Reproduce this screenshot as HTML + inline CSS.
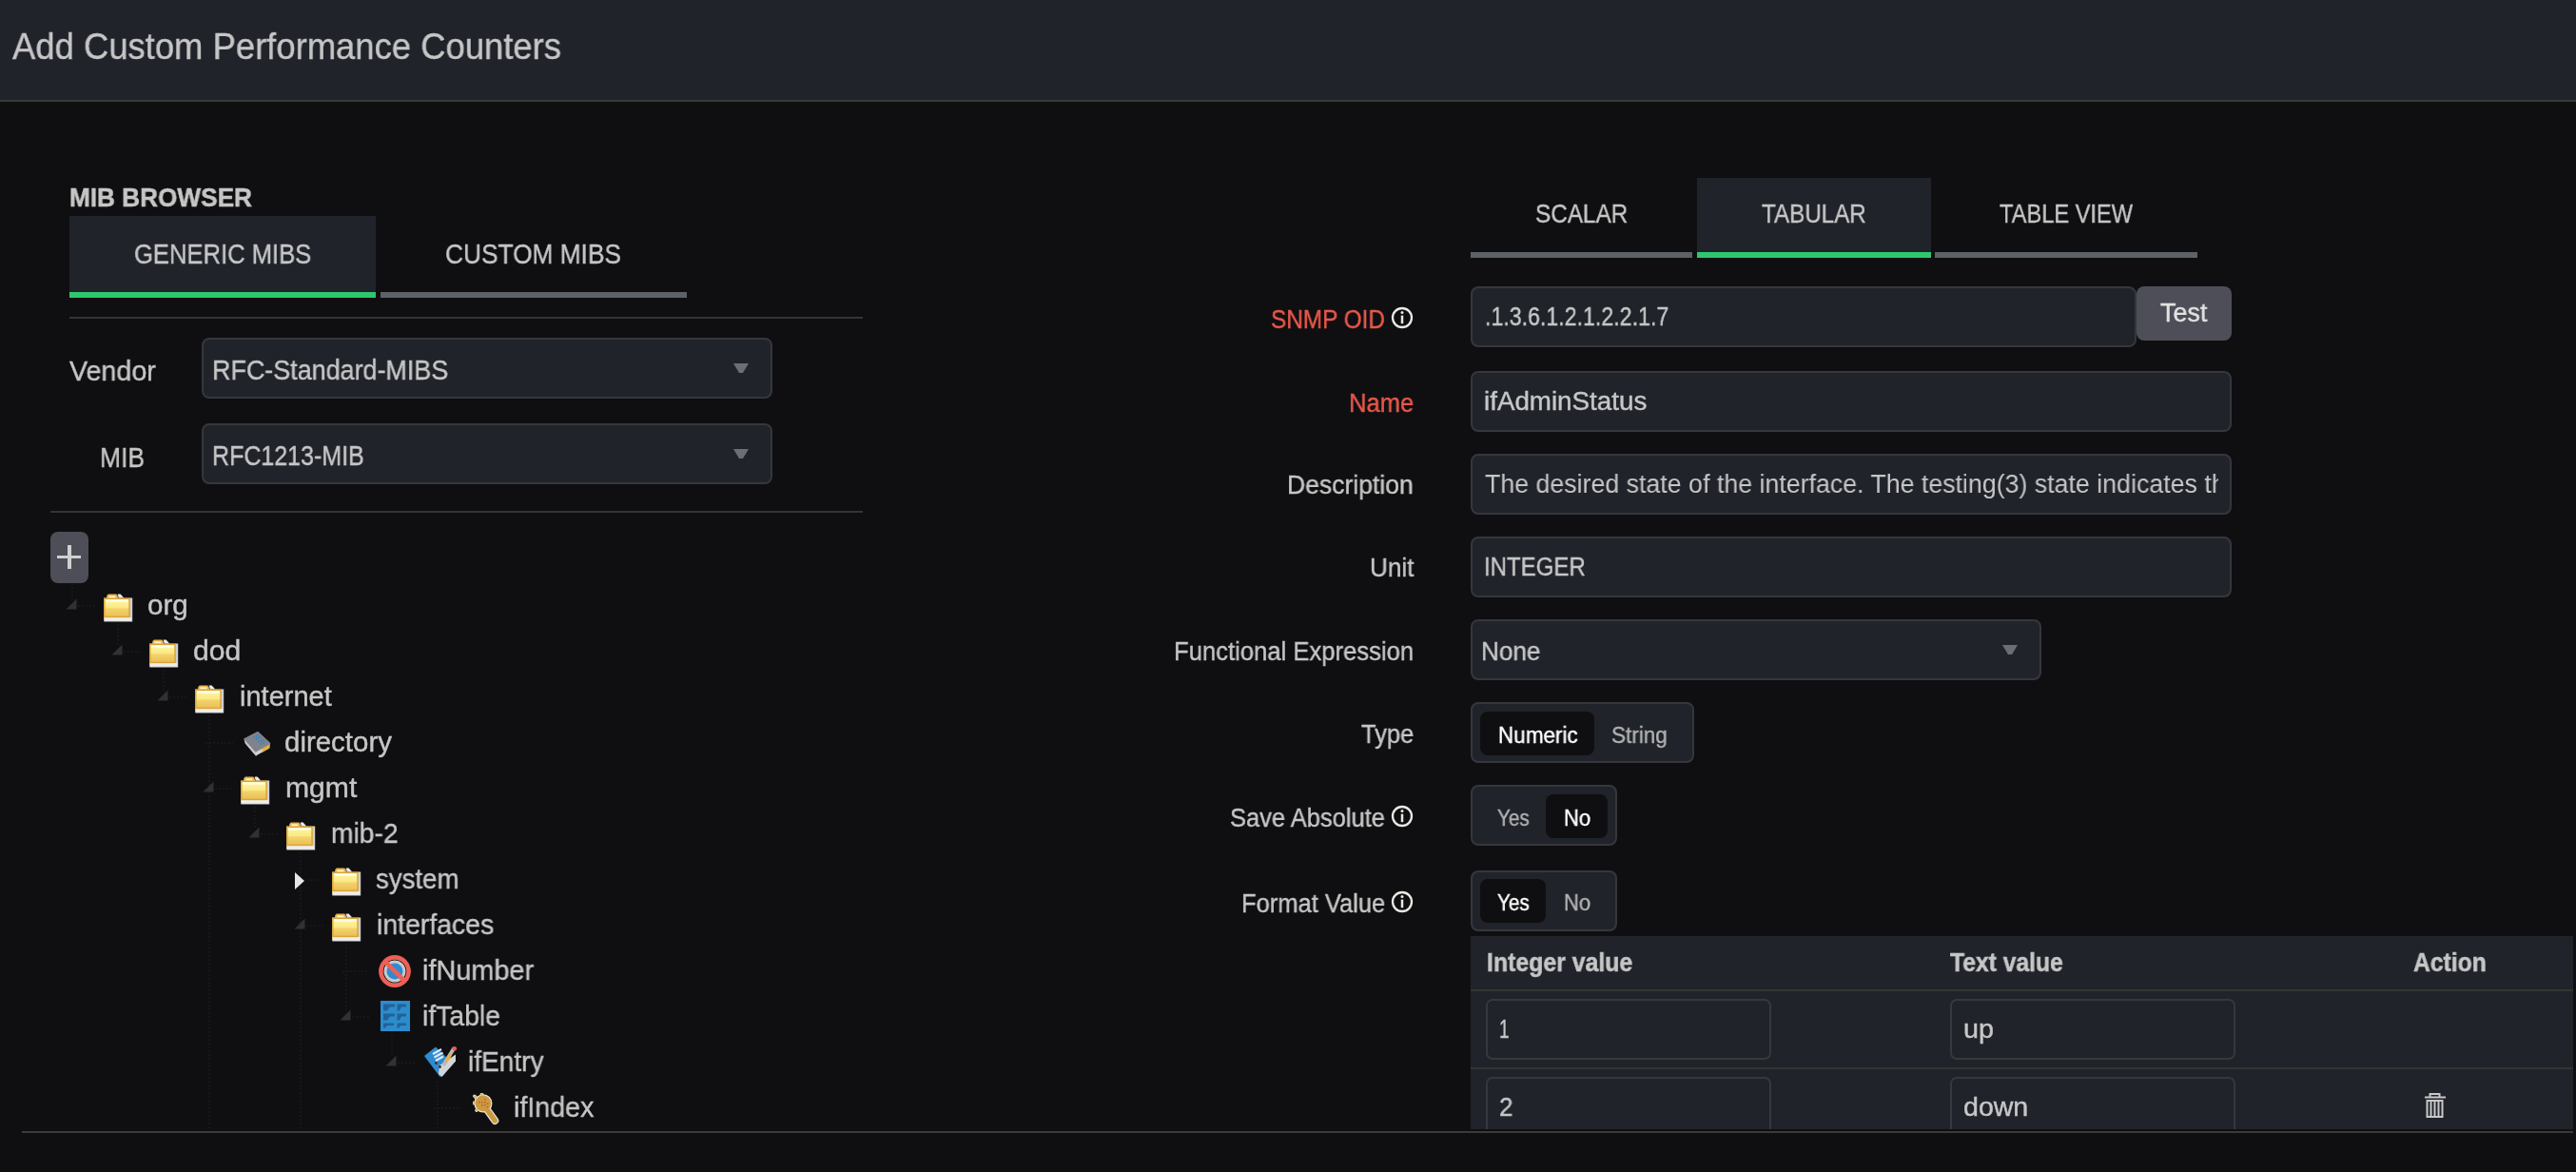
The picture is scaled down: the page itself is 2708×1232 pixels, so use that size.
<!DOCTYPE html>
<html><head><meta charset="utf-8"><title>Add Custom Performance Counters</title>
<style>
html,body{margin:0;padding:0;background:#0f0f11;}
body{width:2708px;height:1232px;position:relative;font-family:"Liberation Sans",sans-serif;}
div{position:absolute;box-sizing:border-box;}
.t{white-space:nowrap;transform-origin:0 0;will-change:transform;}
.a{position:absolute;display:block;}
</style></head><body>
<svg width="0" height="0" style="position:absolute"><defs><linearGradient id="fg" x1="0" y1="0" x2="0" y2="1"><stop offset="0" stop-color="#fff9a6"/><stop offset=".5" stop-color="#fbe884"/><stop offset=".55" stop-color="#f3d46c"/><stop offset="1" stop-color="#e9bc52"/></linearGradient></defs></svg>
<div style="left:0px;top:0px;width:2708px;height:105px;background:#21232b;"></div>
<div style="left:0px;top:105px;width:2708px;height:2px;background:#3a3937;"></div>
<div class="t" style="left:13.25px;top:29.00px;font-size:39px;line-height:39px;color:#c6c6c6;-webkit-text-stroke:0.4px;transform:scaleX(0.9340);">Add Custom Performance Counters</div>
<div class="t" style="left:72.75px;top:193.50px;font-size:28px;line-height:28px;color:#c6c6c6;font-weight:bold;-webkit-text-stroke:0.5px;transform:scaleX(0.9351);">MIB BROWSER</div>
<div style="left:73px;top:227px;width:322px;height:80px;background:#21232b;"></div>
<div style="left:73px;top:307px;width:322px;height:6px;background:#2dc86e;"></div>
<div style="left:400px;top:307px;width:322px;height:6px;background:#5e6266;"></div>
<div class="t" style="left:140.75px;top:252.50px;font-size:29px;line-height:29px;color:#c6c6c6;-webkit-text-stroke:0.4px;transform:scaleX(0.8823);">GENERIC MIBS</div>
<div class="t" style="left:468.25px;top:252.50px;font-size:29px;line-height:29px;color:#c6c6c6;-webkit-text-stroke:0.4px;transform:scaleX(0.9064);">CUSTOM MIBS</div>
<div style="left:73px;top:333px;width:834px;height:2px;background:#343434;"></div>
<div class="t" style="left:73.25px;top:376.25px;font-size:29px;line-height:29px;color:#c6c6c6;-webkit-text-stroke:0.4px;transform:scaleX(0.9875);">Vendor</div>
<div style="left:212px;top:355px;width:600px;height:64px;background:#21232b;border:2px solid #35373d;border-radius:8px;"></div>
<div class="t" style="left:222.50px;top:374.75px;font-size:29px;line-height:29px;color:#c6c6c6;-webkit-text-stroke:0.4px;transform:scaleX(0.9280);">RFC-Standard-MIBS</div>
<div class="t" style="left:104.50px;top:466.50px;font-size:29px;line-height:29px;color:#c6c6c6;-webkit-text-stroke:0.4px;transform:scaleX(0.9115);">MIB</div>
<div style="left:212px;top:445px;width:600px;height:64px;background:#21232b;border:2px solid #35373d;border-radius:8px;"></div>
<div class="t" style="left:222.50px;top:464.75px;font-size:29px;line-height:29px;color:#c6c6c6;-webkit-text-stroke:0.4px;transform:scaleX(0.8619);">RFC1213-MIB</div>
<svg class="a" style="left:770px;top:381px" width="18" height="12" viewBox="0 0 18 12"><path d="M1 1h16l-6 10h-4z" fill="#6b6e73"/></svg>
<svg class="a" style="left:770px;top:471px" width="18" height="12" viewBox="0 0 18 12"><path d="M1 1h16l-6 10h-4z" fill="#6b6e73"/></svg>
<div style="left:53px;top:537px;width:854px;height:2px;background:#343434;"></div>
<div style="left:53px;top:559px;width:40px;height:54px;background:#4d4e58;border-radius:8px"></div>
<div style="left:60.2px;top:584px;width:25.0px;height:3.2999999999999545px;background:#d0d0d0;"></div>
<div style="left:71.3px;top:573px;width:3.299999999999997px;height:25px;background:#d0d0d0;"></div>
<div style="left:75px;top:613px;width:2px;height:17px;background:repeating-linear-gradient(to bottom,#17171a 0 2px,transparent 2px 4px)"></div>
<div style="left:123px;top:656px;width:2px;height:22px;background:repeating-linear-gradient(to bottom,#17171a 0 2px,transparent 2px 4px)"></div>
<div style="left:171px;top:704px;width:2px;height:22px;background:repeating-linear-gradient(to bottom,#17171a 0 2px,transparent 2px 4px)"></div>
<div style="left:219px;top:752px;width:2px;height:436px;background:repeating-linear-gradient(to bottom,#17171a 0 2px,transparent 2px 4px)"></div>
<div style="left:267px;top:848px;width:2px;height:22px;background:repeating-linear-gradient(to bottom,#17171a 0 2px,transparent 2px 4px)"></div>
<div style="left:315px;top:896px;width:2px;height:292px;background:repeating-linear-gradient(to bottom,#17171a 0 2px,transparent 2px 4px)"></div>
<div style="left:363px;top:992px;width:2px;height:70px;background:repeating-linear-gradient(to bottom,#17171a 0 2px,transparent 2px 4px)"></div>
<div style="left:411px;top:1088px;width:2px;height:22px;background:repeating-linear-gradient(to bottom,#17171a 0 2px,transparent 2px 4px)"></div>
<div style="left:459px;top:1136px;width:2px;height:52px;background:repeating-linear-gradient(to bottom,#17171a 0 2px,transparent 2px 4px)"></div>
<div style="left:82px;top:636px;width:19px;height:2px;background:repeating-linear-gradient(to right,#17171a 0 2px,transparent 2px 4px)"></div>
<svg class="a" style="left:68px;top:628.0px" width="13" height="13" viewBox="0 0 13 13"><path d="M12.5 1.5v11H1.5z" fill="#303035"/></svg>
<svg class="a" style="left:108px;top:622.0px" width="32" height="32" viewBox="0 0 32 32"><path d="M1.400 26h27V6.600h2.800v24.900H1.400z" fill="#cfcfd6"/><rect x="1.400" y="27" width="28.600" height="3.600" fill="#f0eee9"/><path d="M4.200 7V4.200l1.600-1.600h8.400l1.600 1.800V7z" fill="#e7b349"/><rect x="6.400" y="4.400" width="7" height="1.800" fill="#fff6cc"/><path d="M15.600 2.600h3l3.600 4h-5.400z" fill="#e8e8ee"/><rect x="1.100" y="6.600" width="27.600" height="20.500" fill="url(#fg)"/><rect x="1.800" y="7.300" width="26.200" height="19.100" fill="none" stroke="#dca43a" stroke-width="1.400"/><rect x="3" y="8.600" width="23.600" height="2" fill="#fffdf2"/></svg>
<div class="t" style="left:155.00px;top:622.00px;font-size:29px;line-height:29px;color:#c6c6c6;-webkit-text-stroke:0.4px;transform:scaleX(1.0202);">org</div>
<div style="left:130px;top:684px;width:19px;height:2px;background:repeating-linear-gradient(to right,#17171a 0 2px,transparent 2px 4px)"></div>
<svg class="a" style="left:116px;top:676.0px" width="13" height="13" viewBox="0 0 13 13"><path d="M12.5 1.5v11H1.5z" fill="#303035"/></svg>
<svg class="a" style="left:156px;top:670.0px" width="32" height="32" viewBox="0 0 32 32"><path d="M1.400 26h27V6.600h2.800v24.900H1.400z" fill="#cfcfd6"/><rect x="1.400" y="27" width="28.600" height="3.600" fill="#f0eee9"/><path d="M4.200 7V4.200l1.600-1.600h8.400l1.600 1.800V7z" fill="#e7b349"/><rect x="6.400" y="4.400" width="7" height="1.800" fill="#fff6cc"/><path d="M15.600 2.600h3l3.600 4h-5.400z" fill="#e8e8ee"/><rect x="1.100" y="6.600" width="27.600" height="20.500" fill="url(#fg)"/><rect x="1.800" y="7.300" width="26.200" height="19.100" fill="none" stroke="#dca43a" stroke-width="1.400"/><rect x="3" y="8.600" width="23.600" height="2" fill="#fffdf2"/></svg>
<div class="t" style="left:202.50px;top:670.00px;font-size:29px;line-height:29px;color:#c6c6c6;-webkit-text-stroke:0.4px;transform:scaleX(1.0388);">dod</div>
<div style="left:178px;top:732px;width:19px;height:2px;background:repeating-linear-gradient(to right,#17171a 0 2px,transparent 2px 4px)"></div>
<svg class="a" style="left:164px;top:724.0px" width="13" height="13" viewBox="0 0 13 13"><path d="M12.5 1.5v11H1.5z" fill="#303035"/></svg>
<svg class="a" style="left:204px;top:718.0px" width="32" height="32" viewBox="0 0 32 32"><path d="M1.400 26h27V6.600h2.800v24.900H1.400z" fill="#cfcfd6"/><rect x="1.400" y="27" width="28.600" height="3.600" fill="#f0eee9"/><path d="M4.200 7V4.200l1.600-1.600h8.400l1.600 1.800V7z" fill="#e7b349"/><rect x="6.400" y="4.400" width="7" height="1.800" fill="#fff6cc"/><path d="M15.600 2.600h3l3.600 4h-5.400z" fill="#e8e8ee"/><rect x="1.100" y="6.600" width="27.600" height="20.500" fill="url(#fg)"/><rect x="1.800" y="7.300" width="26.200" height="19.100" fill="none" stroke="#dca43a" stroke-width="1.400"/><rect x="3" y="8.600" width="23.600" height="2" fill="#fffdf2"/></svg>
<div class="t" style="left:251.50px;top:718.00px;font-size:29px;line-height:29px;color:#c6c6c6;-webkit-text-stroke:0.4px;">internet</div>
<div style="left:216px;top:780px;width:29px;height:2px;background:repeating-linear-gradient(to right,#17171a 0 2px,transparent 2px 4px)"></div>
<svg class="a" style="left:255px;top:765.0px" width="32" height="32" viewBox="0 0 32 32"><path d="M2 11.800L3.200 16.500 14 29.300V24z" fill="#c9c9cd" stroke="#c9c9cd" stroke-width="1" stroke-linejoin="round"/><path d="M14 24.500v5L28.300 21.500l.3-5z" fill="#d2d2d5"/><path d="M20.500 26L28.300 21.500l.3-5L20.500 21z" fill="#e2b13e"/><path d="M2.600 11.800L16 5 28.300 16.500 14 24.500z" fill="#82828c" stroke="#82828c" stroke-width="2" stroke-linejoin="round"/><g stroke="#2f86c6" stroke-width="1.600" stroke-dasharray="1.500 1.300"><path d="M11.300 10.300L17 7.550"/><path d="M13.700 12.700L19.500 9.950"/><path d="M16.200 15.100L22 12.350"/><path d="M18.600 17.500L24.400 14.750"/><path d="M14 10.800L18.300 8.750"/><path d="M19.500 14.800L23.300 13"/></g></svg>
<div class="t" style="left:299.00px;top:766.00px;font-size:29px;line-height:29px;color:#c6c6c6;-webkit-text-stroke:0.4px;transform:scaleX(1.0156);">directory</div>
<div style="left:226px;top:828px;width:19px;height:2px;background:repeating-linear-gradient(to right,#17171a 0 2px,transparent 2px 4px)"></div>
<svg class="a" style="left:212px;top:820.0px" width="13" height="13" viewBox="0 0 13 13"><path d="M12.5 1.5v11H1.5z" fill="#303035"/></svg>
<svg class="a" style="left:252px;top:814.0px" width="32" height="32" viewBox="0 0 32 32"><path d="M1.400 26h27V6.600h2.800v24.900H1.400z" fill="#cfcfd6"/><rect x="1.400" y="27" width="28.600" height="3.600" fill="#f0eee9"/><path d="M4.200 7V4.200l1.600-1.600h8.400l1.600 1.800V7z" fill="#e7b349"/><rect x="6.400" y="4.400" width="7" height="1.800" fill="#fff6cc"/><path d="M15.600 2.600h3l3.600 4h-5.400z" fill="#e8e8ee"/><rect x="1.100" y="6.600" width="27.600" height="20.500" fill="url(#fg)"/><rect x="1.800" y="7.300" width="26.200" height="19.100" fill="none" stroke="#dca43a" stroke-width="1.400"/><rect x="3" y="8.600" width="23.600" height="2" fill="#fffdf2"/></svg>
<div class="t" style="left:299.90px;top:814.00px;font-size:29px;line-height:29px;color:#c6c6c6;-webkit-text-stroke:0.4px;transform:scaleX(1.0393);">mgmt</div>
<div style="left:274px;top:876px;width:19px;height:2px;background:repeating-linear-gradient(to right,#17171a 0 2px,transparent 2px 4px)"></div>
<svg class="a" style="left:260px;top:868.0px" width="13" height="13" viewBox="0 0 13 13"><path d="M12.5 1.5v11H1.5z" fill="#303035"/></svg>
<svg class="a" style="left:300px;top:862.0px" width="32" height="32" viewBox="0 0 32 32"><path d="M1.400 26h27V6.600h2.800v24.900H1.400z" fill="#cfcfd6"/><rect x="1.400" y="27" width="28.600" height="3.600" fill="#f0eee9"/><path d="M4.200 7V4.200l1.600-1.600h8.400l1.600 1.800V7z" fill="#e7b349"/><rect x="6.400" y="4.400" width="7" height="1.800" fill="#fff6cc"/><path d="M15.600 2.600h3l3.600 4h-5.400z" fill="#e8e8ee"/><rect x="1.100" y="6.600" width="27.600" height="20.500" fill="url(#fg)"/><rect x="1.800" y="7.300" width="26.200" height="19.100" fill="none" stroke="#dca43a" stroke-width="1.400"/><rect x="3" y="8.600" width="23.600" height="2" fill="#fffdf2"/></svg>
<div class="t" style="left:347.70px;top:862.00px;font-size:29px;line-height:29px;color:#c6c6c6;-webkit-text-stroke:0.4px;transform:scaleX(0.9727);">mib-2</div>
<div style="left:322px;top:924px;width:19px;height:2px;background:repeating-linear-gradient(to right,#17171a 0 2px,transparent 2px 4px)"></div>
<svg class="a" style="left:310px;top:917.0px" width="10" height="18" viewBox="0 0 10 18"><path d="M0 0l10 9L0 18z" fill="#e6e6e6"/></svg>
<svg class="a" style="left:348px;top:910.0px" width="32" height="32" viewBox="0 0 32 32"><path d="M1.400 26h27V6.600h2.800v24.900H1.400z" fill="#cfcfd6"/><rect x="1.400" y="27" width="28.600" height="3.600" fill="#f0eee9"/><path d="M4.200 7V4.200l1.600-1.600h8.400l1.600 1.800V7z" fill="#e7b349"/><rect x="6.400" y="4.400" width="7" height="1.800" fill="#fff6cc"/><path d="M15.600 2.600h3l3.600 4h-5.400z" fill="#e8e8ee"/><rect x="1.100" y="6.600" width="27.600" height="20.500" fill="url(#fg)"/><rect x="1.800" y="7.300" width="26.200" height="19.100" fill="none" stroke="#dca43a" stroke-width="1.400"/><rect x="3" y="8.600" width="23.600" height="2" fill="#fffdf2"/></svg>
<div class="t" style="left:395.10px;top:910.00px;font-size:29px;line-height:29px;color:#c6c6c6;-webkit-text-stroke:0.4px;transform:scaleX(0.9522);">system</div>
<div style="left:322px;top:972px;width:19px;height:2px;background:repeating-linear-gradient(to right,#17171a 0 2px,transparent 2px 4px)"></div>
<svg class="a" style="left:308px;top:964.0px" width="13" height="13" viewBox="0 0 13 13"><path d="M12.5 1.5v11H1.5z" fill="#303035"/></svg>
<svg class="a" style="left:348px;top:958.0px" width="32" height="32" viewBox="0 0 32 32"><path d="M1.400 26h27V6.600h2.800v24.900H1.400z" fill="#cfcfd6"/><rect x="1.400" y="27" width="28.600" height="3.600" fill="#f0eee9"/><path d="M4.200 7V4.200l1.600-1.600h8.400l1.600 1.800V7z" fill="#e7b349"/><rect x="6.400" y="4.400" width="7" height="1.800" fill="#fff6cc"/><path d="M15.600 2.600h3l3.600 4h-5.400z" fill="#e8e8ee"/><rect x="1.100" y="6.600" width="27.600" height="20.500" fill="url(#fg)"/><rect x="1.800" y="7.300" width="26.200" height="19.100" fill="none" stroke="#dca43a" stroke-width="1.400"/><rect x="3" y="8.600" width="23.600" height="2" fill="#fffdf2"/></svg>
<div class="t" style="left:395.50px;top:958.00px;font-size:29px;line-height:29px;color:#c6c6c6;-webkit-text-stroke:0.4px;transform:scaleX(0.9804);">interfaces</div>
<div style="left:360px;top:1020px;width:29px;height:2px;background:repeating-linear-gradient(to right,#17171a 0 2px,transparent 2px 4px)"></div>
<svg class="a" style="left:397px;top:1003.0px" width="36" height="36" viewBox="0 0 36 36"><circle cx="18" cy="18" r="11.5" fill="#c9cacc"/><circle cx="18" cy="18" r="8.5" fill="#2f8bd0"/><circle cx="18" cy="18" r="14.6" fill="none" stroke="#ee5f56" stroke-width="4.6"/><path d="M8 8L28 28" stroke="#ee5f56" stroke-width="4.6"/></svg>
<div class="t" style="left:443.70px;top:1006.00px;font-size:29px;line-height:29px;color:#c6c6c6;-webkit-text-stroke:0.4px;transform:scaleX(0.9957);">ifNumber</div>
<div style="left:370px;top:1068px;width:19px;height:2px;background:repeating-linear-gradient(to right,#17171a 0 2px,transparent 2px 4px)"></div>
<svg class="a" style="left:356px;top:1060.0px" width="13" height="13" viewBox="0 0 13 13"><path d="M12.5 1.5v11H1.5z" fill="#303035"/></svg>
<svg class="a" style="left:400px;top:1052.0px" width="32" height="32" viewBox="0 0 32 32"><rect x="0" y="0" width="31" height="32" fill="#2d8ccb"/><g fill="#21629a" transform="translate(0,-1.5)"><path d="M3 5h12v3h-5l-3 4H3z"/><path d="M17.5 5h9.5v3h-5l-2 4h-2.5z"/><path d="M3 15h12v3h-5l-3 4H3z"/><path d="M17.5 15h9.5v3h-5l-2 4h-2.5z"/><path d="M3 25h11v2.5H7l-2 2.5H3z"/><path d="M17.5 25h9.5v2.5h-6l-1.5 2.5h-2z"/></g></svg>
<div class="t" style="left:443.70px;top:1054.00px;font-size:29px;line-height:29px;color:#c6c6c6;-webkit-text-stroke:0.4px;transform:scaleX(0.9775);">ifTable</div>
<div style="left:418px;top:1116px;width:19px;height:2px;background:repeating-linear-gradient(to right,#17171a 0 2px,transparent 2px 4px)"></div>
<svg class="a" style="left:404px;top:1108.0px" width="13" height="13" viewBox="0 0 13 13"><path d="M12.5 1.5v11H1.5z" fill="#303035"/></svg>
<svg class="a" style="left:445px;top:1099.0px" width="36" height="34" viewBox="0 0 36 34"><path d="M1 11L13 1.5 24 12 22 30.5 17.5 33z" fill="#2f8bd0"/><path d="M17 21L34 9.5v7L19.5 33 16 30z" fill="#d4d5d9"/><path d="M10 9l9-5M11.500 12.500l9-5M13 16l8-4.500" stroke="#dfe9f2" stroke-width="2.200"/><path d="M32.500 2.500L21 21" stroke="#b9b9bd" stroke-width="4"/><path d="M29 9L24 17" stroke="#e8b23a" stroke-width="3"/><circle cx="32.800" cy="3.300" r="2.300" fill="#e85c50"/><circle cx="13.500" cy="18.500" r="1.400" fill="#3a3030"/><circle cx="17.500" cy="22.500" r="1.400" fill="#3a3030"/></svg>
<div class="t" style="left:492.00px;top:1102.00px;font-size:29px;line-height:29px;color:#c6c6c6;-webkit-text-stroke:0.4px;transform:scaleX(0.9679);">ifEntry</div>
<div style="left:456px;top:1164px;width:29px;height:2px;background:repeating-linear-gradient(to right,#17171a 0 2px,transparent 2px 4px)"></div>
<svg class="a" style="left:497px;top:1149.0px" width="30" height="34" viewBox="0 0 30 34"><g stroke="#e6dfd0" stroke-linejoin="round" stroke-linecap="round"><circle cx="10.900" cy="10.900" r="8.300" fill="#cb9a3f" stroke-width="2.600"/><path d="M14 16L23.300 29" stroke-width="8"/><path d="M3.500 5L1.800 3.200M2.300 10.500H.5M9.500 2.500V.8M5.500 16.500L4 18.200" stroke-width="3.400"/></g><circle cx="10.900" cy="10.900" r="8.300" fill="#cb9a3f"/><path d="M14 16L23.300 29" stroke="#cb9a3f" stroke-width="5.400" stroke-linecap="round"/><path d="M3.500 5L1.800 3.200M2.300 10.500H.5M9.500 2.500V.8M5.500 16.500L4 18.200" stroke="#d8ae58" stroke-width="1.600" stroke-linecap="round"/><g fill="#c05a40"><rect x="6" y="9" width="1.500" height="1.500"/><rect x="9" y="9" width="1.500" height="1.500"/><rect x="12" y="9" width="1.500" height="1.500"/><rect x="9" y="12" width="1.500" height="1.500"/><rect x="12" y="12" width="1.500" height="1.500"/><rect x="12" y="6" width="1.500" height="1.500"/><rect x="14.800" y="10.500" width="1.500" height="1.500"/><rect x="14.800" y="14" width="1.500" height="1.500"/></g></svg>
<div class="t" style="left:539.80px;top:1150.00px;font-size:29px;line-height:29px;color:#c6c6c6;-webkit-text-stroke:0.4px;transform:scaleX(0.9873);">ifIndex</div>
<div style="left:1546px;top:265px;width:233px;height:6px;background:#5e6266;"></div>
<div style="left:1784px;top:187px;width:246px;height:78px;background:#21232b;"></div>
<div style="left:1784px;top:265px;width:246px;height:6px;background:#2dc86e;"></div>
<div style="left:2034px;top:265px;width:276px;height:6px;background:#5e6266;"></div>
<div class="t" style="left:1614.00px;top:211.00px;font-size:28px;line-height:28px;color:#c6c6c6;-webkit-text-stroke:0.4px;transform:scaleX(0.8679);">SCALAR</div>
<div class="t" style="left:1851.50px;top:211.00px;font-size:28px;line-height:28px;color:#c6c6c6;-webkit-text-stroke:0.4px;transform:scaleX(0.8637);">TABULAR</div>
<div class="t" style="left:2101.80px;top:211.00px;font-size:28px;line-height:28px;color:#c6c6c6;-webkit-text-stroke:0.4px;transform:scaleX(0.8439);">TABLE VIEW</div>
<div class="t" style="left:1335.75px;top:323.00px;font-size:27px;line-height:27px;color:#e8584b;-webkit-text-stroke:0.4px;transform:scaleX(0.9021);">SNMP OID</div>
<svg class="a" style="left:1461.75px;top:322.2px" width="24" height="24" viewBox="0 0 24 24"><circle cx="12" cy="12" r="10" fill="none" stroke="#eae8e2" stroke-width="2.300"/><rect x="10.750" y="9.600" width="2.500" height="8.600" fill="#eae8e2"/><circle cx="12" cy="6.600" r="1.500" fill="#eae8e2"/></svg>
<div style="left:1546px;top:301px;width:700px;height:64px;background:#21232b;border:2px solid #35373d;border-radius:8px;"></div>
<div class="t" style="left:1560.75px;top:319.75px;font-size:27px;line-height:27px;color:#c6c6c6;-webkit-text-stroke:0.4px;transform:scaleX(0.8582);">.1.3.6.1.2.1.2.2.1.7</div>
<div style="left:2246px;top:301px;width:100px;height:57px;background:#4d4e58;border-radius:8px"></div>
<div class="t" style="left:2270.90px;top:315.90px;font-size:27px;line-height:27px;color:#e2e2e2;-webkit-text-stroke:0.4px;transform:scaleX(0.9966);">Test</div>
<div class="t" style="left:1417.75px;top:410.50px;font-size:27px;line-height:27px;color:#e8584b;-webkit-text-stroke:0.4px;transform:scaleX(0.9474);">Name</div>
<div style="left:1546px;top:390px;width:800px;height:64px;background:#21232b;border:2px solid #35373d;border-radius:8px;"></div>
<div class="t" style="left:1560.25px;top:408.75px;font-size:27px;line-height:27px;color:#c6c6c6;-webkit-text-stroke:0.4px;transform:scaleX(1.0281);">ifAdminStatus</div>
<div class="t" style="left:1353.25px;top:497.00px;font-size:27px;line-height:27px;color:#c6c6c6;-webkit-text-stroke:0.4px;transform:scaleX(0.9829);">Description</div>
<div style="left:1546px;top:477px;width:800px;height:64px;background:#21232b;border:2px solid #35373d;border-radius:8px;"></div>
<div style="left:1560px;top:479px;width:772px;height:60px;overflow:hidden"><div class="t" style="left:0.75px;top:16.50px;font-size:27px;line-height:27px;color:#c6c6c6;transform:scaleX(0.9906)">The desired state of the interface. The testing(3) state indicates that no operational packets</div></div>
<div class="t" style="left:1439.50px;top:584.25px;font-size:27px;line-height:27px;color:#c6c6c6;-webkit-text-stroke:0.4px;transform:scaleX(0.9686);">Unit</div>
<div style="left:1546px;top:564px;width:800px;height:64px;background:#21232b;border:2px solid #35373d;border-radius:8px;"></div>
<div class="t" style="left:1560.25px;top:582.50px;font-size:27px;line-height:27px;color:#c6c6c6;-webkit-text-stroke:0.4px;transform:scaleX(0.8895);">INTEGER</div>
<div class="t" style="left:1233.75px;top:671.75px;font-size:27px;line-height:27px;color:#c6c6c6;-webkit-text-stroke:0.4px;transform:scaleX(0.9496);">Functional Expression</div>
<div style="left:1546px;top:651px;width:600px;height:64px;background:#21232b;border:2px solid #35373d;border-radius:8px;"></div>
<div class="t" style="left:1556.50px;top:670.75px;font-size:28px;line-height:28px;color:#c6c6c6;-webkit-text-stroke:0.4px;transform:scaleX(0.9336);">None</div>
<svg class="a" style="left:2104px;top:677px" width="18" height="12" viewBox="0 0 18 12"><path d="M1 1h16l-6 10h-4z" fill="#6b6e73"/></svg>
<div class="t" style="left:1430.75px;top:758.75px;font-size:27px;line-height:27px;color:#c6c6c6;-webkit-text-stroke:0.4px;transform:scaleX(0.9439);">Type</div>
<div style="left:1546px;top:738px;width:235px;height:64px;background:#21232b;border:2px solid #35373d;border-radius:8px;"></div>
<div style="left:1556px;top:748px;width:120px;height:46px;background:#0f0f11;border-radius:8px"></div>
<div class="t" style="left:1574.50px;top:761.75px;font-size:23px;line-height:23px;color:#ffffff;-webkit-text-stroke:0.4px;transform:scaleX(0.9781);">Numeric</div>
<div class="t" style="left:1694.00px;top:761.75px;font-size:23px;line-height:23px;color:#b2b2b2;-webkit-text-stroke:0.4px;transform:scaleX(0.9779);">String</div>
<div class="t" style="left:1292.75px;top:847.00px;font-size:27px;line-height:27px;color:#c6c6c6;-webkit-text-stroke:0.4px;transform:scaleX(0.9442);">Save Absolute</div>
<svg class="a" style="left:1461.75px;top:846.2px" width="24" height="24" viewBox="0 0 24 24"><circle cx="12" cy="12" r="10" fill="none" stroke="#eae8e2" stroke-width="2.300"/><rect x="10.750" y="9.600" width="2.500" height="8.600" fill="#eae8e2"/><circle cx="12" cy="6.600" r="1.500" fill="#eae8e2"/></svg>
<div style="left:1546px;top:825px;width:154px;height:64px;background:#21232b;border:2px solid #35373d;border-radius:8px;"></div>
<div style="left:1625px;top:835px;width:65px;height:46px;background:#0f0f11;border-radius:8px"></div>
<div class="t" style="left:1574.00px;top:848.50px;font-size:23px;line-height:23px;color:#b2b2b2;-webkit-text-stroke:0.4px;transform:scaleX(0.8997);">Yes</div>
<div class="t" style="left:1644.00px;top:848.50px;font-size:23px;line-height:23px;color:#ffffff;-webkit-text-stroke:0.4px;transform:scaleX(0.9611);">No</div>
<div class="t" style="left:1304.50px;top:937.00px;font-size:27px;line-height:27px;color:#c6c6c6;-webkit-text-stroke:0.4px;transform:scaleX(0.9450);">Format Value</div>
<svg class="a" style="left:1461.75px;top:936.2px" width="24" height="24" viewBox="0 0 24 24"><circle cx="12" cy="12" r="10" fill="none" stroke="#eae8e2" stroke-width="2.300"/><rect x="10.750" y="9.600" width="2.500" height="8.600" fill="#eae8e2"/><circle cx="12" cy="6.600" r="1.500" fill="#eae8e2"/></svg>
<div style="left:1546px;top:915px;width:154px;height:64px;background:#21232b;border:2px solid #35373d;border-radius:8px;"></div>
<div style="left:1556px;top:924px;width:69px;height:46px;background:#0f0f11;border-radius:8px"></div>
<div class="t" style="left:1574.00px;top:937.50px;font-size:23px;line-height:23px;color:#ffffff;-webkit-text-stroke:0.4px;transform:scaleX(0.8997);">Yes</div>
<div class="t" style="left:1644.00px;top:937.50px;font-size:23px;line-height:23px;color:#b2b2b2;-webkit-text-stroke:0.4px;transform:scaleX(0.9611);">No</div>
<div style="left:1546px;top:984px;width:1159px;height:203px;background:#21232b;"></div>
<div style="left:1546px;top:1040px;width:1159px;height:2px;background:#343434;"></div>
<div style="left:1546px;top:1122px;width:1159px;height:2px;background:#343434;"></div>
<div class="t" style="left:1562.50px;top:998.75px;font-size:27px;line-height:27px;color:#c6c6c6;font-weight:bold;-webkit-text-stroke:0.5px;transform:scaleX(0.9201);">Integer value</div>
<div class="t" style="left:2049.50px;top:998.75px;font-size:27px;line-height:27px;color:#c6c6c6;font-weight:bold;-webkit-text-stroke:0.5px;transform:scaleX(0.9130);">Text value</div>
<div class="t" style="left:2537.10px;top:998.75px;font-size:27px;line-height:27px;color:#c6c6c6;font-weight:bold;-webkit-text-stroke:0.5px;transform:scaleX(0.9137);">Action</div>
<div style="left:1562px;top:1050px;width:300px;height:64px;background:#21232b;border:2px solid #36383e;border-radius:7px;"></div>
<div style="left:2050px;top:1050px;width:300px;height:64px;background:#21232b;border:2px solid #36383e;border-radius:7px;"></div>
<div class="t" style="left:1575.75px;top:1068.75px;font-size:27px;line-height:27px;color:#c6c6c6;-webkit-text-stroke:0.4px;transform:scaleX(0.6994);">1</div>
<div class="t" style="left:2063.75px;top:1068.75px;font-size:27px;line-height:27px;color:#c6c6c6;-webkit-text-stroke:0.4px;transform:scaleX(1.0658);">up</div>
<div style="left:1546px;top:1124px;width:1159px;height:63px;overflow:hidden"><div style="left:16px;top:8px;width:300px;height:64px;background:#21232b;border:2px solid #36383e;border-radius:7px;box-sizing:border-box"></div><div style="left:504px;top:8px;width:300px;height:64px;background:#21232b;border:2px solid #36383e;border-radius:7px;box-sizing:border-box"></div></div>
<div class="t" style="left:1575.75px;top:1150.75px;font-size:27px;line-height:27px;color:#c6c6c6;-webkit-text-stroke:0.4px;transform:scaleX(0.9659);">2</div>
<div class="t" style="left:2063.75px;top:1150.75px;font-size:27px;line-height:27px;color:#c6c6c6;-webkit-text-stroke:0.4px;transform:scaleX(1.0572);">down</div>
<svg class="a" style="left:2548px;top:1148px" width="24" height="28" viewBox="0 0 24 28"><g fill="none" stroke="#c8c8c8" stroke-width="2"><path d="M6.500 5.500V2h10v3.500"/><path d="M1 5.500h22"/><path d="M3.500 9v17h16V9z"/><path d="M7.500 9v17M11.500 9v17M15.500 9v17"/></g></svg>
<div style="left:23px;top:1189px;width:2682px;height:2px;background:#3a3a38;"></div>
</body></html>
